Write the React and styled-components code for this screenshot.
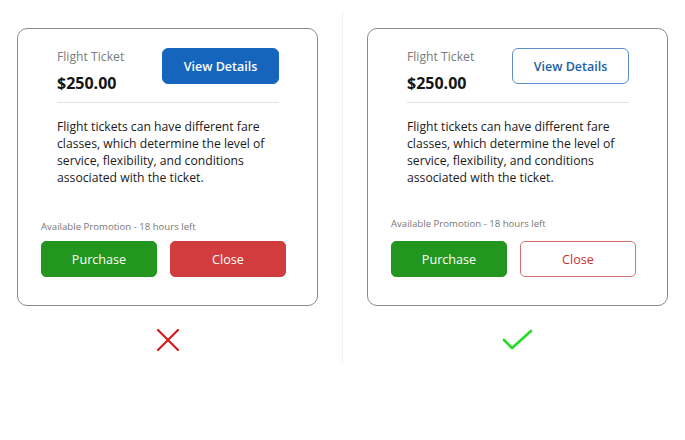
import React from "react";
import styled, { createGlobalStyle } from "styled-components";

const Global = createGlobalStyle`
  html, body { margin: 0; padding: 0; background: #fff; }
  body { font-family: "Open Sans", "Liberation Sans", sans-serif; width: 685px; height: 440px; overflow: hidden; }
`;

const Page = styled.div`
  display: flex;
  width: 685px;
  height: 440px;
`;

const Column = styled.div`
  width: ${(p) => p.$w}px;
  padding-left: ${(p) => p.$pl}px;
  padding-top: 28px;
  box-sizing: border-box;
  display: flex;
  flex-direction: column;
`;

const Divider = styled.div`
  width: 1px;
  margin-top: 12px;
  height: 350px;
  background: #f1f1f1;
`;

const Card = styled.div`
  width: 301px;
  height: 278px;
  box-sizing: border-box;
  border: 1px solid #8a8a8a;
  border-radius: 10px;
  display: flex;
  flex-direction: column;
  padding: 19px 31px 28px 23px;
`;

const Inner = styled.div`
  padding-left: 16px;
  padding-right: 7px;
`;

const Header = styled.div`
  display: flex;
  justify-content: space-between;
  align-items: flex-start;
`;

const TitleBlock = styled.div`
  display: flex;
  flex-direction: column;
`;

const Title = styled.div`
  font-size: 12.2px;
  line-height: 18px;
  color: #7a7a7a;
`;

const Price = styled.div`
  margin-top: 4px;
  font-size: 16px;
  line-height: 26px;
  font-weight: 700;
  color: #151515;
`;

const DetailsButton = styled.button`
  width: 117px;
  height: 36px;
  box-sizing: border-box;
  border-radius: 6px;
  font-family: inherit;
  font-size: 12.5px;
  font-weight: 600;
  cursor: pointer;
  border: 1px solid ${(p) => (p.$outline ? "#5b8fc9" : "#1565bd")};
  background: ${(p) => (p.$outline ? "#fff" : "#1565bd")};
  color: ${(p) => (p.$outline ? "#1a5ea8" : "#fff")};
`;

const Rule = styled.div`
  height: 1px;
  background: #e2e2e2;
  margin-top: 6px;
`;

const Body = styled.p`
  margin: 15px 0 0;
  font-size: 12.2px;
  line-height: 17px;
  color: #1a1a1a;
`;

const Footer = styled.div`
  margin-top: auto;
  display: flex;
  flex-direction: column;
`;

const Promo = styled.div`
  font-size: 9.6px;
  line-height: 14px;
  color: #777;
`;

const Actions = styled.div`
  display: flex;
  gap: 13px;
  margin-top: ${(p) => p.$gap}px;
`;

const ActionButton = styled.button`
  width: 116px;
  flex-shrink: 0;
  height: 36px;
  box-sizing: border-box;
  border-radius: 5px;
  font-family: inherit;
  font-size: 12.6px;
  font-weight: 500;
  cursor: pointer;
  border: 1px solid ${(p) => p.$border};
  background: ${(p) => p.$bg};
  color: ${(p) => p.$fg};
`;

const Mark = styled.div`
  width: 301px;
  display: flex;
  justify-content: center;
  margin-top: 22px;
`;

function TicketCard({ good }) {
  return (
    <Card>
      <Inner>
        <Header>
          <TitleBlock>
            <Title>Flight Ticket</Title>
            <Price>$250.00</Price>
          </TitleBlock>
          <DetailsButton $outline={good}>View Details</DetailsButton>
        </Header>
        <Rule />
        <Body>
          Flight tickets can have different fare classes, which determine the
          level of service, flexibility, and conditions associated with the
          ticket.
        </Body>
      </Inner>
      <Footer>
        <Promo>Available Promotion - 18 hours left</Promo>
        <Actions $gap={good ? 10 : 7}>
          <ActionButton $bg="#22961e" $border="#22961e" $fg="#fff">
            Purchase
          </ActionButton>
          {good ? (
            <ActionButton $bg="#fff" $border="#d97070" $fg="#c93030">
              Close
            </ActionButton>
          ) : (
            <ActionButton $bg="#d13c3e" $border="#d13c3e" $fg="#fff">
              Close
            </ActionButton>
          )}
        </Actions>
      </Footer>
    </Card>
  );
}

export default function App() {
  return (
    <>
      <Global />
      <Page>
        <Column $w={342} $pl={17}>
          <TicketCard good={false} />
          <Mark>
            <svg width="24" height="24" viewBox="0 0 24 24">
              <path d="M2 2 L22 22 M22 2 L2 22" stroke="#d01c1c" strokeWidth="2.2" strokeLinecap="round" fill="none" />
            </svg>
          </Mark>
        </Column>
        <Divider />
        <Column $w={342} $pl={24}>
          <TicketCard good />
          <Mark>
            <svg width="32" height="24" viewBox="0 0 32 24">
              <path d="M2 12 L10 20 L29 3" stroke="#22dd22" strokeWidth="2.6" strokeLinecap="round" strokeLinejoin="round" fill="none" />
            </svg>
          </Mark>
        </Column>
      </Page>
    </>
  );
}
